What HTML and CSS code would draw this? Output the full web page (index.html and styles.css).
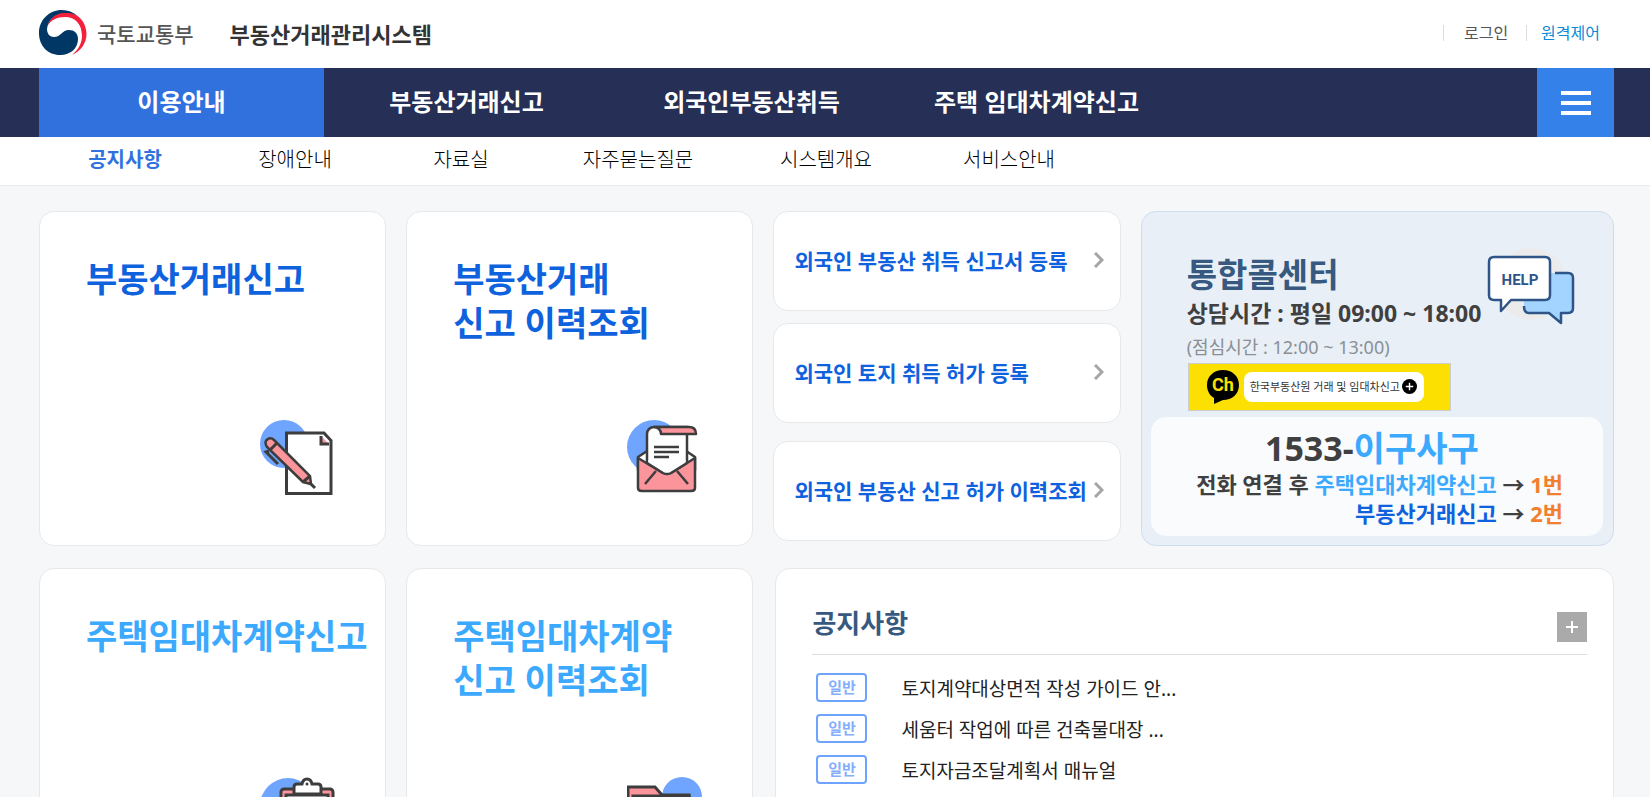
FILE: index.html
```html
<!DOCTYPE html>
<html lang="ko">
<head>
    <meta charset="UTF-8">
    <meta name="viewport" content="width=device-width, initial-scale=1.0">
    <title>부동산거래관리시스템</title>
    <link rel="stylesheet" href="styles.css">
</head>
<body>
    <header class="header">
        <a href="#" class="logo">
            <svg class="logo-mark" viewBox="0 0 48 46" aria-hidden="true">
                <path fill="#f5203c" d="M8 17 C11 7 19 2 28 2 C39 3 47.500 12 47.500 24 C47.500 33 42 41 33 45 C40 39 43 33 43 25 C43 14 36 6 26 6 C18 6 11 10 8 17 Z"/>
                <path fill="#003764" d="M39 6 C34 2 29 0 23 0 C10 0 0 10 0 23 C0 36 9 45 21 45 C32 45 39 38 39 29 C39 23 35 20 30 20 C23 20 22 27 15 27 C11 27 8 24 8 19 C9 10 16 3 26 3 C32 3 36 4 39 6 Z"/>
                <path fill="#f5203c" d="M9 15 C12 7 19 3 27 3 C37 3 46 11 46 24 L43 25 C43 14 36 7 26 7 C18 7 12 10 9 15 Z"/>
            </svg>
            <span class="ministry">국토교통부</span>
            <span class="system-name">부동산거래관리시스템</span>
        </a>
        <ul class="util">
            <li><a href="#">로그인</a></li>
            <li><a href="#" class="remote">원격제어</a></li>
        </ul>
    </header>

    <nav class="gnb">
        <ul class="gnb-list">
            <li><a href="#" class="active">이용안내</a></li>
            <li><a href="#">부동산거래신고</a></li>
            <li><a href="#">외국인부동산취득</a></li>
            <li><a href="#">주택 임대차계약신고</a></li>
        </ul>
        <button type="button" class="menu-btn" aria-label="전체메뉴">
            <span></span><span></span><span></span>
        </button>
    </nav>

    <nav class="lnb">
        <ul class="lnb-list">
            <li><a href="#" class="active">공지사항</a></li>
            <li><a href="#">장애안내</a></li>
            <li><a href="#">자료실</a></li>
            <li><a href="#">자주묻는질문</a></li>
            <li><a href="#">시스템개요</a></li>
            <li><a href="#">서비스안내</a></li>
        </ul>
    </nav>

    <main class="main">
        <a href="#" class="card service">
            <h2>부동산거래신고</h2>
            <svg class="service-icon" viewBox="0 0 75 75" aria-hidden="true">
                <circle cx="24" cy="24" r="24" fill="#6fa4ff"/>
                <path d="M26.500 13 H64 L71 20.500 V73.500 H26.500 Z" fill="#fff" stroke="#3d3d3d" stroke-width="3"/>
                <path d="M61 16 V24 H69 Z" fill="#fb949b"/>
                <path d="M61 16 V24 H69" fill="none" stroke="#3d3d3d" stroke-width="3"/>
                <path d="M6 25 C4 20 10 16 14 20 L50 56 L51 64 L43 62 L7 27 Z" fill="#fb949b" stroke="#3d3d3d" stroke-width="2.500"/>
                <path d="M10 30 L17 23 M43 62 L50 56 M51 64 L55 68 M9 31 L6 32 L18 44" fill="none" stroke="#3d3d3d" stroke-width="3"/>
            </svg>
        </a>
        <a href="#" class="card service">
            <h2>부동산거래<br>신고 이력조회</h2>
            <svg class="service-icon" viewBox="0 0 75 75" aria-hidden="true">
                <circle cx="27" cy="27" r="27" fill="#6fa4ff"/>
                <path d="M11 37 L40 18 L68 37 V50 H11 Z" fill="#fff" stroke="#3d3d3d" stroke-width="2.500" stroke-linejoin="round"/>
                <path d="M20 50 V14 C20 10 23 7 27 7 H60 V58 H20 Z" fill="#fff" stroke="#3d3d3d" stroke-width="2.500"/>
                <path d="M27 7 H62 C67 7 69 10 69 14 H34 C34 10 31 7 27 7 Z" fill="#fb949b" stroke="#3d3d3d" stroke-width="2.500" stroke-linejoin="round"/>
                <path d="M11 38 L36 53 Q40 55 44 53 L68 38 V68 Q68 71 64 71 H15 Q11 71 11 68 Z" fill="#fb949b" stroke="#3d3d3d" stroke-width="2.500" stroke-linejoin="round"/>
                <path d="M21.500 44 L36 53 Q40 55 44 53 L58.500 44 V40 H21.500 Z" fill="#fff"/>
                <path d="M20 43 L36 53 Q40 55 44 53 L60 43" fill="none" stroke="#3d3d3d" stroke-width="2.500"/>
                <path d="M18 64 L29 51 M61 64 L50 51 M27 27 H52 M27 32 H52 M27 37 H42" fill="none" stroke="#3d3d3d" stroke-width="2.500"/>
            </svg>
        </a>

        <div class="foreign">
            <div class="foreign-group">
                <a href="#" class="card link-card">외국인 부동산 취득 신고서 등록
                    <svg class="chevron" viewBox="0 0 10 16" aria-hidden="true"><path d="M1 1 L8 8 L1 15"/></svg>
                </a>
                <a href="#" class="card link-card">외국인 토지 취득 허가 등록
                    <svg class="chevron" viewBox="0 0 10 16" aria-hidden="true"><path d="M1 1 L8 8 L1 15"/></svg>
                </a>
            </div>
            <a href="#" class="card link-card">외국인 부동산 신고 허가 이력조회
                <svg class="chevron" viewBox="0 0 10 16" aria-hidden="true"><path d="M1 1 L8 8 L1 15"/></svg>
            </a>
        </div>

        <section class="card call">
            <div class="call-top">
                <div class="call-info">
                    <h2>통합콜센터</h2>
                    <p class="hours">상담시간 : 평일 09:00 ~ 18:00</p>
                    <p class="lunch">(점심시간 : 12:00 ~ 13:00)</p>
                </div>
                <svg class="help-icon" viewBox="0 0 88 78" aria-hidden="true">
                    <circle cx="44" cy="37" r="36" fill="#ebebec"/>
                    <path d="M58 26 H81 Q86 26 86 31 V61 Q86 66 81 66 H74 V76 L62 66 H42 Q37 66 37 61 V50 H58 Z" fill="#a3d3ff"/>
                    <path d="M68 26 H81 Q86 26 86 31 V61 Q86 66 81 66 H74 V76 L62 66 H42 Q37 66 37 59" fill="none" stroke="#2f5588" stroke-width="2.500" stroke-linejoin="round"/>
                    <path d="M7 10 H58 Q63 10 63 15 V48 Q63 53 58 53 H24 L14 64 V53 H7 Q2 53 2 48 V15 Q2 10 7 10 Z" fill="#fff" stroke="#2f5588" stroke-width="2.500" stroke-linejoin="round"/>
                    <text x="33" y="38" class="help-text">HELP</text>
                </svg>
            </div>
            <a href="#" class="kakao">
                <svg class="kakao-mark" viewBox="0 0 32 35" aria-hidden="true">
                    <path d="M16 0 C25 0 32 6 32 15 C32 24 25 30 16 30 L7 34 V28 C2 25 0 20 0 15 C0 6 7 0 16 0 Z"/>
                    <text x="16" y="21" class="kakao-text">Ch</text>
                </svg>
                <span class="kakao-pill">한국부동산원 거래 및 임대차신고
                    <svg class="kakao-plus" viewBox="0 0 16 16" aria-hidden="true"><circle cx="8" cy="8" r="8"/><path d="M4 8 H12 M8 4 V12" stroke="#fff" stroke-width="1.500"/></svg>
                </span>
            </a>
            <div class="phone">
                <p class="number">1533-<span class="sky">이구사구</span></p>
                <p class="guide">전화 연결 후 <span class="sky">주택임대차계약신고</span> → <em>1번</em></p>
                <p class="guide"><span class="blue">부동산거래신고</span> → <em>2번</em></p>
            </div>
        </section>

        <a href="#" class="card service lease">
            <h2>주택임대차계약신고</h2>
            <svg class="service-icon" viewBox="0 0 75 75" aria-hidden="true">
                <circle cx="28" cy="29" r="28" fill="#6fa4ff"/>
                <rect x="21" y="12" width="52" height="62" rx="3" fill="#fb949b" stroke="#3d3d3d" stroke-width="3"/>
                <rect x="26" y="18" width="42" height="52" fill="#fff" stroke="#3d3d3d" stroke-width="3"/>
                <path d="M34 17 V10 Q34 7 37 7 H42 Q43 2 47 2 Q51 2 52 7 H58 Q61 7 61 10 V17 Z" fill="#fff" stroke="#3d3d3d" stroke-width="3"/>
                <circle cx="47" cy="7" r="1.500" fill="#3d3d3d"/>
                <path d="M34 32 H60 M34 42 H60 M34 52 H60" stroke="#3d3d3d" stroke-width="3"/>
            </svg>
        </a>
        <a href="#" class="card service lease">
            <h2>주택임대차계약<br>신고 이력조회</h2>
            <svg class="service-icon" viewBox="0 0 75 75" aria-hidden="true">
                <circle cx="55" cy="20" r="20" fill="#6fa4ff"/>
                <path d="M1 72 V10 H28 L35 18 H62 V72 Z" fill="#fb949b" stroke="#3d3d3d" stroke-width="3"/>
                <path d="M6 72 V19 H62 V72 Z" fill="#fff" stroke="#3d3d3d" stroke-width="3"/>
            </svg>
        </a>

        <section class="card notice">
            <div class="notice-head">
                <h2>공지사항</h2>
                <button type="button" class="more-btn" aria-label="공지사항 더보기">
                    <svg viewBox="0 0 30 30" aria-hidden="true"><path d="M9 15 H21 M15 9 V21"/></svg>
                </button>
            </div>
            <ul class="notice-list">
                <li><span class="badge">일반</span><a href="#">토지계약대상면적 작성 가이드 안...</a></li>
                <li><span class="badge">일반</span><a href="#">세움터 작업에 따른 건축물대장 ...</a></li>
                <li><span class="badge">일반</span><a href="#">토지자금조달계획서 매뉴얼</a></li>
            </ul>
        </section>
    </main>
</body>
</html>
```
FILE: styles.css
```css
* {
    box-sizing: border-box;
}
body {
    margin: 0;
    font-family: "Noto Sans", "Noto Sans CJK KR", sans-serif;
    color: #222;
    background: #f6f7f9;
}
h2, p, ul {
    margin: 0;
    padding: 0;
}
ul {
    list-style: none;
}
a {
    color: inherit;
    text-decoration: none;
}
button {
    border: 0;
    padding: 0;
    cursor: pointer;
}

/* Header */
.header {
    display: flex;
    align-items: center;
    justify-content: space-between;
    height: 68px;
    padding: 0 36px 2px 39px;
    background: #fff;
}
.logo {
    display: flex;
    align-items: center;
}
.logo-mark {
    width: 48px;
    height: 46px;
}
.ministry {
    margin-left: 10px;
    font-size: 21px;
    font-weight: 500;
    color: #555;
}
.system-name {
    margin-left: 36px;
    font-size: 22px;
    font-weight: 700;
    color: #333;
}
.util {
    display: flex;
    font-size: 16px;
    line-height: 16px;
    color: #555;
}
.util li {
    padding: 0 18px 0 20px;
    border-left: 1px solid #ddd;
}
.util li + li {
    padding: 0 14px;
}
.remote {
    color: #0b8ad8;
}

/* Main menu */
.gnb {
    display: flex;
    justify-content: space-between;
    height: 69px;
    padding: 0 36px 0 39px;
    background: #262f55;
}
.gnb-list {
    display: flex;
}
.gnb-list a {
    display: block;
    width: 285px;
    font-size: 24px;
    font-weight: 700;
    line-height: 68px;
    height: 69px;
    text-align: center;
    color: #fff;
}
.gnb-list .active {
    background: #3071de;
}
.menu-btn {
    display: flex;
    flex-direction: column;
    align-items: center;
    justify-content: center;
    gap: 6px;
    width: 77px;
    background: #3481ea;
}
.menu-btn span {
    width: 30px;
    height: 4px;
    background: #fff;
}

/* Sub menu */
.lnb {
    padding: 0 36px 0 39px;
    background: #fff;
    border-bottom: 1px solid #ebebeb;
}
.lnb-list {
    display: grid;
    grid-template-columns: 172px 168px 164px 190px 186px 180px;
    height: 48px;
    font-size: 20px;
    font-weight: 300;
    line-height: 46px;
    text-align: center;
    color: #000;
}
.lnb-list .active {
    font-weight: 700;
    color: #3071de;
}

/* Cards */
.main {
    display: grid;
    grid-template-columns: 347fr 347fr 347fr 473fr;
    grid-auto-rows: 335px;
    gap: 22px 20px;
    padding: 25px 36px 40px 39px;
}
.card {
    background: #fff;
    border: 1px solid #e7e8ea;
    border-radius: 15px;
}
.service {
    display: flex;
    flex-direction: column;
    justify-content: space-between;
    padding: 45px 0 50px 46px;
    color: #0f62de;
}
.service h2 {
    font-size: 34px;
    line-height: 44px;
    white-space: nowrap;
}
.service-icon {
    align-self: flex-end;
    width: 75px;
    height: 75px;
    margin-right: 50px;
}
.lease {
    color: #3ba9fd;
}

/* Foreigner links */
.foreign {
    display: flex;
    flex-direction: column;
    gap: 18px;
}
.foreign-group {
    display: flex;
    flex-direction: column;
    gap: 12px;
}
.link-card {
    display: flex;
    align-items: center;
    justify-content: space-between;
    height: 100px;
    padding: 0 16px 2px 20px;
    font-size: 21px;
    font-weight: 700;
    color: #0f62de;
    white-space: nowrap;
}
.chevron {
    flex: none;
    width: 10px;
    height: 16px;
    fill: none;
    stroke: #a5a5a5;
    stroke-width: 3;
}

/* Call center */
.call {
    display: flex;
    flex-direction: column;
    padding: 35px 10px 9px 9px;
    background: #e8eff7;
    border-color: #cfdced;
}
.call-top {
    display: flex;
    justify-content: space-between;
    padding: 0 28px 0 36px;
}
.call-info {
    padding-top: 8px;
    white-space: nowrap;
}
.call h2 {
    font-size: 33px;
    line-height: 40px;
    color: #37597f;
}
.hours {
    font-size: 23px;
    font-weight: 700;
    line-height: 36px;
    color: #404040;
}
.lunch {
    font-size: 18px;
    line-height: 32px;
    color: #8b8f94;
}
.help-icon {
    flex: none;
    width: 88px;
    height: 78px;
}
.help-text {
    font: 700 15px Roboto, sans-serif;
    text-anchor: middle;
    fill: #2f5588;
}
.kakao {
    display: flex;
    align-items: center;
    gap: 5px;
    width: 263px;
    height: 48px;
    margin-left: 37px;
    padding-left: 18px;
    background: #fbe002;
    border: 1px solid #ccc;
}
.kakao-mark {
    width: 32px;
    height: 35px;
}
.kakao-text {
    font: 700 18px Roboto, sans-serif;
    text-anchor: middle;
    fill: #fbe002;
}
.kakao-pill {
    display: flex;
    align-items: center;
    justify-content: space-between;
    width: 180px;
    height: 30px;
    padding: 0 7px 2px 6px;
    font-size: 11px;
    color: #333;
    background: #fff;
    border-radius: 8px;
    white-space: nowrap;
}
.kakao-plus {
    flex: none;
    width: 15px;
    height: 15px;
}
.phone {
    margin-top: auto;
    padding: 9px 40px 8px;
    background: #f9fbfd;
    border-radius: 15px;
    font-weight: 700;
    color: #404040;
    white-space: nowrap;
}
.number {
    padding-right: 10px;
    font-size: 34px;
    line-height: 44px;
    text-align: center;
}
.guide {
    font-size: 22px;
    line-height: 29px;
    text-align: right;
}
.guide em {
    font-style: normal;
    color: #f27f2f;
}
.sky {
    color: #3ba9fd;
}
.blue {
    color: #0f62de;
}

/* Notice */
.notice {
    grid-column: 3 / 5;
    margin-left: 2px;
    padding: 34px 26px 0 36px;
}
.notice-head {
    display: flex;
    align-items: flex-start;
    justify-content: space-between;
    height: 52px;
    border-bottom: 1px solid #ddd;
}
.notice h2 {
    font-size: 26px;
    line-height: 40px;
    color: #37597f;
}
.more-btn {
    width: 30px;
    height: 30px;
    margin-top: 9px;
    background: #aaa;
}
.more-btn svg {
    display: block;
    fill: none;
    stroke: #fff;
    stroke-width: 2;
}
.notice-list {
    padding: 12px 0 0 4px;
}
.notice-list li {
    display: flex;
    align-items: center;
    gap: 34px;
    height: 41px;
    font-size: 19px;
}
.badge {
    width: 51px;
    border: 2px solid #6ea4ff;
    border-radius: 4px;
    font-size: 15px;
    font-weight: 700;
    line-height: 25px;
    text-align: center;
    color: #85aefc;
}
```
